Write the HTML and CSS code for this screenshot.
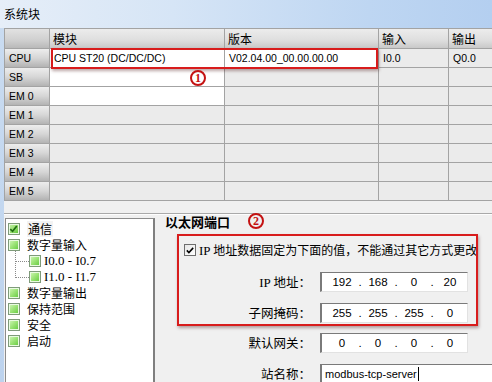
FILE: index.html
```html
<!DOCTYPE html>
<html lang="zh">
<head>
<meta charset="utf-8">
<title>系统块</title>
<link rel="stylesheet" href="styles.css">
</head>
<body>
<div class="window">
  <div class="titlebar">系统块</div>
  <div class="client">
    <div class="grid-wrap">
      <div class="grid">
        <div class="hcell corner"></div>
        <div class="hcell">模块</div>
        <div class="hcell">版本</div>
        <div class="hcell">输入</div>
        <div class="hcell">输出</div>

        <div class="rh">CPU</div>
        <div class="cell white">CPU ST20 (DC/DC/DC)</div>
        <div class="cell white">V02.04.00_00.00.00.00</div>
        <div class="cell">I0.0</div>
        <div class="cell">Q0.0</div>

        <div class="rh">SB</div>
        <div class="cell white"></div>
        <div class="cell"></div>
        <div class="cell"></div>
        <div class="cell"></div>

        <div class="rh">EM 0</div>
        <div class="cell white"></div>
        <div class="cell"></div>
        <div class="cell"></div>
        <div class="cell"></div>

        <div class="rh">EM 1</div>
        <div class="cell"></div><div class="cell"></div><div class="cell"></div><div class="cell"></div>
        <div class="rh">EM 2</div>
        <div class="cell"></div><div class="cell"></div><div class="cell"></div><div class="cell"></div>
        <div class="rh">EM 3</div>
        <div class="cell"></div><div class="cell"></div><div class="cell"></div><div class="cell"></div>
        <div class="rh">EM 4</div>
        <div class="cell"></div><div class="cell"></div><div class="cell"></div><div class="cell"></div>
        <div class="rh">EM 5</div>
        <div class="cell"></div><div class="cell"></div><div class="cell"></div><div class="cell"></div>
      </div>
      <div class="mark mark1"></div>
      <span class="num num1">1</span>
    </div>

    <div class="splitter"></div>

    <div class="lower">
      <div class="tree">
        <div class="item"><span class="ico checked"><svg viewBox="0 0 12 12" width="12" height="12"><path d="M2.5 6.2 L5 8.6 L9.6 2.8" fill="none" stroke="#1f6e12" stroke-width="1.8"/></svg></span><span class="sel">通信</span></div>
        <div class="item"><span class="ico"></span>数字量输入</div>
        <div class="sub">
          <div class="item s1"><span class="ico"></span><span class="lat">I0.0 - I0.7</span></div>
          <div class="item s2"><span class="ico"></span><span class="lat">I1.0 - I1.7</span></div>
        </div>
        <div class="item"><span class="ico"></span>数字量输出</div>
        <div class="item"><span class="ico"></span>保持范围</div>
        <div class="item"><span class="ico"></span>安全</div>
        <div class="item"><span class="ico"></span>启动</div>
      </div>

      <div class="panel">
        <div class="phead">以太网端口<span class="num num2">2</span></div>
        <div class="chkrow">
          <span class="chk"><svg viewBox="0 0 11 11" width="11" height="11"><path d="M2 5.4 L4.3 7.8 L9 2.6" fill="none" stroke="#000" stroke-width="1.7"/></svg></span>
          <span><span class="lat">IP</span> 地址数据固定为下面的值，不能通过其它方式更改</span>
        </div>
        <div class="form">
          <div class="lbl"><span class="lat">IP</span> 地址：</div>
          <div class="field ip"><span>192</span><i>.</i><span>168</span><i>.</i><span>0</span><i>.</i><span>20</span></div>
          <div class="lbl">子网掩码：</div>
          <div class="field ip"><span>255</span><i>.</i><span>255</span><i>.</i><span>255</span><i>.</i><span>0</span></div>
          <div class="lbl">默认网关：</div>
          <div class="field ip"><span>0</span><i>.</i><span>0</span><i>.</i><span>0</span><i>.</i><span>0</span></div>
          <div class="lbl">站名称：</div>
          <div class="field text">modbus-tcp-server<b class="caret"></b></div>
        </div>
        <div class="mark mark2"></div>
      </div>
    </div>
  </div>
</div>
</body>
</html>
```

FILE: styles.css
```css
* { box-sizing: border-box; }
html, body {
  margin: 0;
  padding: 0;
  width: 492px;
  height: 382px;
  overflow: hidden;
}
body {
  font-family: "Noto Sans CJK SC", "Liberation Sans", sans-serif;
  font-size: 12px;
  color: #000;
  background: #c3d8ef;
}
.window {
  width: 492px;
  height: 382px;
  display: flex;
  flex-direction: column;
  background: linear-gradient(to bottom, #cadcf1, #bdd3ee);
}
.titlebar {
  height: 28px;
  line-height: 28px;
  padding-left: 4px;
  flex: none;
  background: linear-gradient(to right, #e6eef8 0%, #d6e5f6 35%, #bed6f2 75%, #b4cff0 100%);
}
.client {
  flex: 1;
  margin-left: 4px;
  background: #f0f0f0;
  display: flex;
  flex-direction: column;
  overflow: hidden;
}
.grid-wrap {
  position: relative;
  flex: none;
}
.grid {
  display: grid;
  grid-template-columns: 44px 174px 153px 69px 80px;
  grid-template-rows: 19px repeat(8, 18px);
  gap: 1px;
  padding: 1px 0 1px 1px;
  background: #a3a3a3;
  width: 530px;
  font-family: "Liberation Sans", Arial, sans-serif;
  font-size: 10.5px;
}
.hcell {
  background: linear-gradient(to bottom, #ececec 0%, #dedede 60%, #c9c9c9 100%);
  padding-left: 3px;
  font-family: "Noto Sans CJK SC", sans-serif;
  font-size: 12px;
  line-height: 19px;
}
.hcell.corner {
  background: linear-gradient(to bottom, #e2e2e2 0%, #cfcfcf 60%, #b9b9b9 100%);
}
.rh {
  background: linear-gradient(to bottom, #ededed 0%, #d6d6d6 50%, #b3b3b3 100%);
  padding-left: 4px;
  line-height: 18px;
}
.cell {
  background: #ebebeb;
  padding-left: 4px;
  line-height: 18px;
  white-space: nowrap;
}
.cell.white { background: #fff; }

.mark {
  position: absolute;
  border: 2.5px solid #d81c1c;
  box-shadow: 1px 2px 3px rgba(60, 0, 0, 0.35);
  pointer-events: none;
}
.mark1 {
  left: 47px;
  top: 20px;
  width: 327px;
  height: 21px;
}
.num {
  display: inline-flex;
  align-items: center;
  justify-content: center;
  width: 16px;
  height: 16px;
  border: 2px solid #c41212;
  border-radius: 50%;
  color: #c41212;
  font-family: "Liberation Serif", "Times New Roman", serif;
  font-weight: bold;
  font-size: 12px;
  line-height: 12px;
}
.num1 {
  position: absolute;
  left: 186px;
  top: 42px;
}

.splitter {
  flex: none;
  height: 13px;
  border-bottom: 1px solid #a9a9a9;
  background: #f0f0f0;
}

.lower {
  flex: 1;
  display: flex;
  background: #f0f0f0;
  border-top: 1px solid #fdfdfd;
  min-width: 0;
}
.tree {
  flex: none;
  width: 150px;
  margin-left: 1px;
  margin-top: 3px;
  background: #fff;
  border: 1px solid #8c8c8c;
  border-right: 2px solid #7f7f7f;
  border-bottom: none;
  padding-top: 2px;
}
.item {
  height: 16px;
  line-height: 16px;
  display: flex;
  align-items: center;
  padding-left: 2px;
  white-space: nowrap;
  position: relative;
}
.ico {
  width: 12px;
  height: 12px;
  flex: none;
  margin-right: 7px;
  border: 1px solid #7f9b7a;
  background: linear-gradient(135deg, #d4f7bc 0%, #9fe57a 45%, #5fc83a 100%);
  box-shadow: inset 0 0 0 1px #e9fbe0;
  display: flex;
  align-items: center;
  justify-content: center;
}
.ico svg { display: block; margin-left: -1px; margin-top: -1px; }
.ico.checked { background: linear-gradient(135deg, #c9f2ad 0%, #8fdc66 55%, #55c033 100%); }
.sel { background: #f3f3f3; padding: 0 1px; }
.sub .item {
  padding-left: 23px;
}
.sub .item::before {
  content: "";
  position: absolute;
  left: 9px;
  width: 13px;
  border-left: 1px dotted #8a8a8a;
  border-bottom: 1px dotted #8a8a8a;
}
.sub .s1::before { top: -2px; height: 10px; }
.sub .s2::before { top: -8px; height: 16px; }
.sub .ico { margin-right: 3px; }
.lat {
  font-family: "Liberation Serif", "Times New Roman", serif;
  font-size: 13px;
}

.panel {
  flex: 1;
  min-width: 0;
  position: relative;
  padding-left: 10px;
}
.phead {
  font-weight: bold;
  font-size: 13px;
  line-height: 16px;
  margin-top: -1px;
  white-space: nowrap;
  display: flex;
  align-items: center;
}
.num2 {
  margin-left: 18px;
  position: relative;
  top: -1px;
}
.chkrow {
  margin-top: 12px;
  margin-left: 19px;
  height: 16px;
  line-height: 16px;
  display: flex;
  align-items: center;
  gap: 3px;
  white-space: nowrap;
}
.chk {
  width: 12px;
  height: 12px;
  border: 1px solid #6d6d6d;
  background: linear-gradient(135deg, #e6e6e6, #ffffff);
  display: flex;
  align-items: center;
  justify-content: center;
  flex: none;
}
.chk svg { display: block; }
.form {
  margin-top: 14px;
  display: grid;
  grid-template-columns: 146px 1fr;
  column-gap: 9px;
  row-gap: 10.5px;
  grid-auto-rows: 20px;
}
.lbl {
  text-align: right;
  line-height: 20px;
  font-size: 12.5px;
  white-space: nowrap;
}
.field {
  background: #fff;
  border: 1px solid #a5a5a5;
  border-top-color: #7a7a7a;
  border-left: 2px solid #7a7a7a;
  border-right-color: #e2e2e2;
  border-bottom-color: #e2e2e2;
  font-family: "Liberation Sans", Arial, sans-serif;
  font-size: 11.5px;
  line-height: 18px;
  height: 20px;
}
.field.ip {
  width: 148px;
  display: flex;
  padding-left: 5px;
}
.field.ip span {
  width: 30px;
  text-align: center;
}
.field.ip i {
  font-style: normal;
  width: 6px;
  text-align: center;
}
.field.text {
  width: 190px;
  padding-left: 3px;
  font-size: 11px;
  display: flex;
  align-items: center;
}
.caret {
  display: inline-block;
  width: 1px;
  height: 14px;
  background: #000;
  margin-left: 1px;
}
.mark2 {
  left: 22px;
  top: 19px;
  width: 301px;
  height: 92px;
}
```
